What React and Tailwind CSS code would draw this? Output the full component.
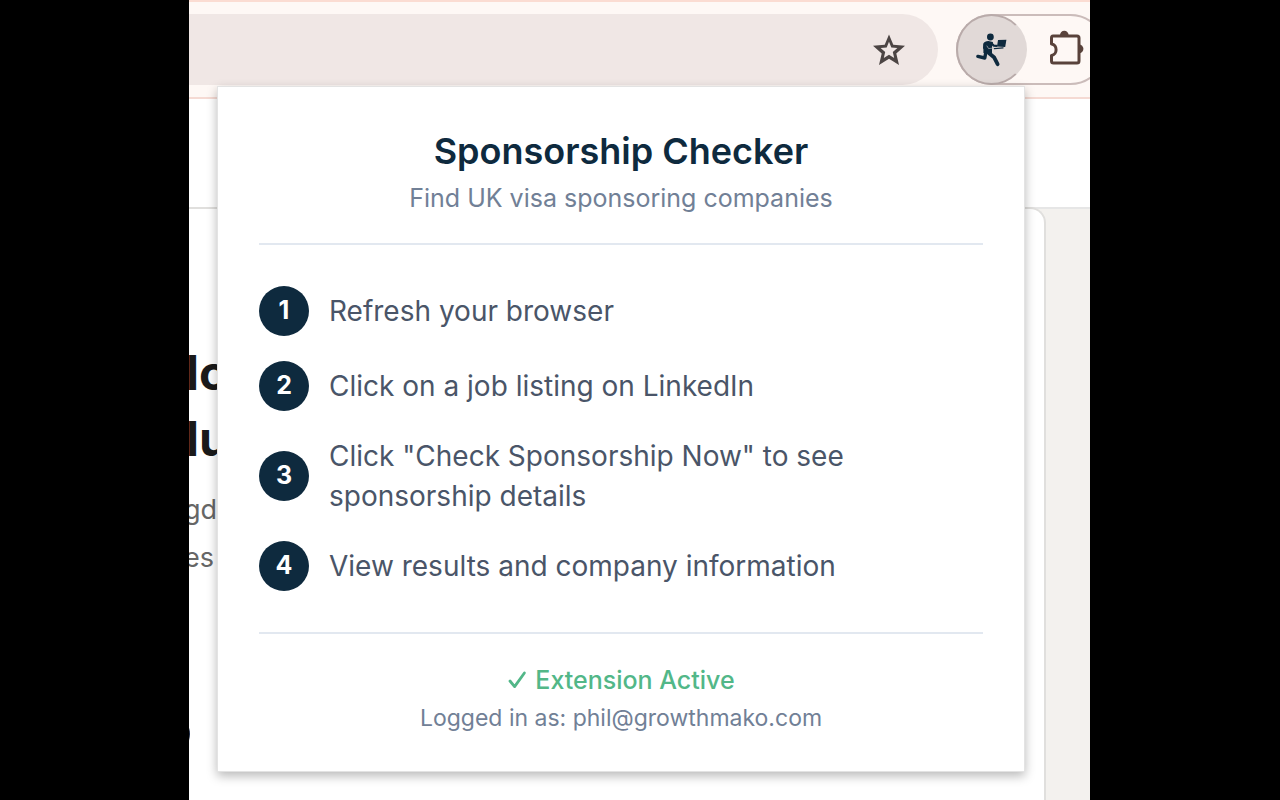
const steps = [
  "Refresh your browser",
  "Click on a job listing on LinkedIn",
  'Click "Check Sponsorship Now" to see sponsorship details',
  "View results and company information",
];

function StarIcon() {
  return (
    <svg viewBox="0 0 32 32" className="h-8 w-8" fill="#4c4544" fillRule="evenodd" aria-hidden="true">
      <path d="M16 0.5 L20.3 10.8 L32 11.8 L23.3 19.4 L26 31 L16 24.8 L6 31 L8.7 19.4 L0 11.8 L11.7 10.8 Z M16 7.8 L13.7 13.4 L7.6 14 L12.2 18 L10.8 24 L16 20.8 L21.2 24 L19.8 18 L24.4 14 L18.3 13.4 Z" />
    </svg>
  );
}

function RunnerIcon() {
  return (
    <svg viewBox="0 0 32 34" className="h-[34px] w-8" fill="none" stroke="#0e2a3e" strokeLinecap="round" strokeLinejoin="round" aria-hidden="true">
      <circle cx="14.4" cy="4" r="3.4" fill="#0e2a3e" stroke="none" />
      <path d="M7.4 11 Q8.6 8 12.4 8 L17 9 L16 14 L16 20.5 L7.4 20 Z" fill="#0e2a3e" stroke="none" />
      <path d="M8.6 10.5 L8 15 L13 17.5" strokeWidth="2" />
      <path d="M15.6 10.4 L17.6 12.6 L20.6 12.8" strokeWidth="2.2" />
      <path d="M11 13 L12.6 15.6 L18 15" strokeWidth="0.7" stroke="#b9b6b8" />
      <path d="M22 7 L30.4 6.8 L29.2 14 L21 13.6 Z" fill="#0e2a3e" stroke="none" />
      <path d="M18.5 15.6 L27 14.9" strokeWidth="1.4" />
      <path d="M9.6 20.5 L8.8 25 L1.9 23.4" strokeWidth="3.4" />
      <path d="M12.8 20 L18 24.2 L21.6 31.2" strokeWidth="3.8" />
    </svg>
  );
}

function PuzzleIcon() {
  return (
    <svg viewBox="0 0 36 36" className="h-9 w-9 shrink-0" fill="none" stroke="#59423b" strokeWidth="3" strokeLinejoin="round" aria-hidden="true">
      <path d="M12 5 A4.2 4.2 0 0 1 20.6 5 Z" fill="#59423b" stroke="none" />
      <path d="M31 14.4 A4.4 4.4 0 0 1 31 23.2 Z" fill="#59423b" stroke="none" />
      <path d="M5 6 H29 Q31 6 31 8 V31 Q31 33 29 33 H5.5 Q3.5 33 3.5 31 V25.4 C9.6 24.8 9.6 14.6 3.5 14 V8 Q3.5 6 5 6 Z" />
    </svg>
  );
}

function CheckIcon() {
  return (
    <svg viewBox="0 0 20 20" className="h-5 w-5" fill="none" stroke="#52b788" strokeWidth="2.8" strokeLinecap="round" strokeLinejoin="round" aria-hidden="true">
      <path d="M3 11 L7.6 16.6 L17.4 3" />
    </svg>
  );
}

function Toolbar() {
  return (
    <header className="flex h-[99px] items-start overflow-hidden border-t-2 border-b-2 border-t-[#fbdcd2] border-b-[#f5dad3] bg-[#fef8f5] pt-3">
      <div className="flex h-[71px] min-w-0 flex-1 items-center justify-end rounded-r-full bg-[#f0e7e5] pr-[33px]">
        <button type="button" aria-label="Bookmark this tab">
          <StarIcon />
        </button>
      </div>
      <div className="-mr-4 ml-[18px] flex h-[71px] w-[150px] shrink-0 items-center rounded-full border-2 border-[#cbbcba]">
        <button type="button" aria-label="Sponsorship Checker" className="-ml-0.5 flex h-[71px] w-[71px] shrink-0 items-center justify-center rounded-full border-2 border-[#b9abaa] border-r-[#e1d9d7] bg-[#e1d9d7]">
          <RunnerIcon />
        </button>
        <button type="button" aria-label="Extensions" className="mb-1 ml-[21px] shrink-0">
          <PuzzleIcon />
        </button>
      </div>
    </header>
  );
}

function Popup() {
  return (
    <section className="absolute top-[86px] right-[65px] left-[28px] border border-[#e3e3e3] bg-white px-[41px] pt-10 pb-[34px] shadow-[0_4px_10px_rgba(0,0,0,0.28)]">
      <div className="border-b-2 border-[#e2e8f0] pb-[22px] text-center">
        <h1 className="text-[36px] leading-[48px] font-semibold text-[#0e2a3e]">Sponsorship Checker</h1>
        <p className="text-[25px] leading-[46px] text-[#718096]">Find UK visa sponsoring companies</p>
      </div>
      <ol className="flex flex-col gap-[25px] py-[41px]">
        {steps.map((step, i) => (
          <li key={step} className="flex items-center gap-5">
            <span className="flex h-[50px] w-[50px] shrink-0 items-center justify-center rounded-full bg-[#0e2a3e] text-[25px] font-bold text-white">
              {i + 1}
            </span>
            <span className="max-w-[560px] text-[28px] leading-[40px] text-[#4a5568]">{step}</span>
          </li>
        ))}
      </ol>
      <div className="border-t-2 border-[#e2e8f0] pt-[27px] text-center">
        <p className="flex items-center justify-center gap-2 text-[25px] leading-[38px] font-medium text-[#52b788]">
          <CheckIcon />
          Extension Active
        </p>
        <p className="text-[23px] leading-[38px] text-[#718096]">Logged in as: phil@growthmako.com</p>
      </div>
    </section>
  );
}

export default function App() {
  return (
    <div className="h-screen overflow-hidden bg-black pr-[190px] pl-[189px] font-['Inter','Liberation_Sans',sans-serif]">
      <div className="relative flex h-full flex-col overflow-hidden bg-white">
        <Toolbar />
        <div className="h-[110px] border-b-2 border-[#e6e6e6]" />
        <main className="flex flex-1 bg-[#f3f1ee]">
          <div className="-mt-0.5 mr-11 flex-1 overflow-hidden rounded-tr-2xl border-t-2 border-r-2 border-[#e0dfdd] bg-white pt-[131px]">
            <h2 className="-ml-[3px] text-[48px] leading-[66px] font-bold text-[#1a1a1a]">
              lo
              <br />
              lu
            </h2>
            <p className="-ml-[5px] pt-[14px] text-[27px] leading-[48px] text-[#666666]">
              gd
              <br />
              es
            </p>
            <div className="mt-[132px] -ml-[39px] h-10 w-10 rounded-full bg-[#1d2a44]" />
          </div>
        </main>
        <Popup />
      </div>
    </div>
  );
}
